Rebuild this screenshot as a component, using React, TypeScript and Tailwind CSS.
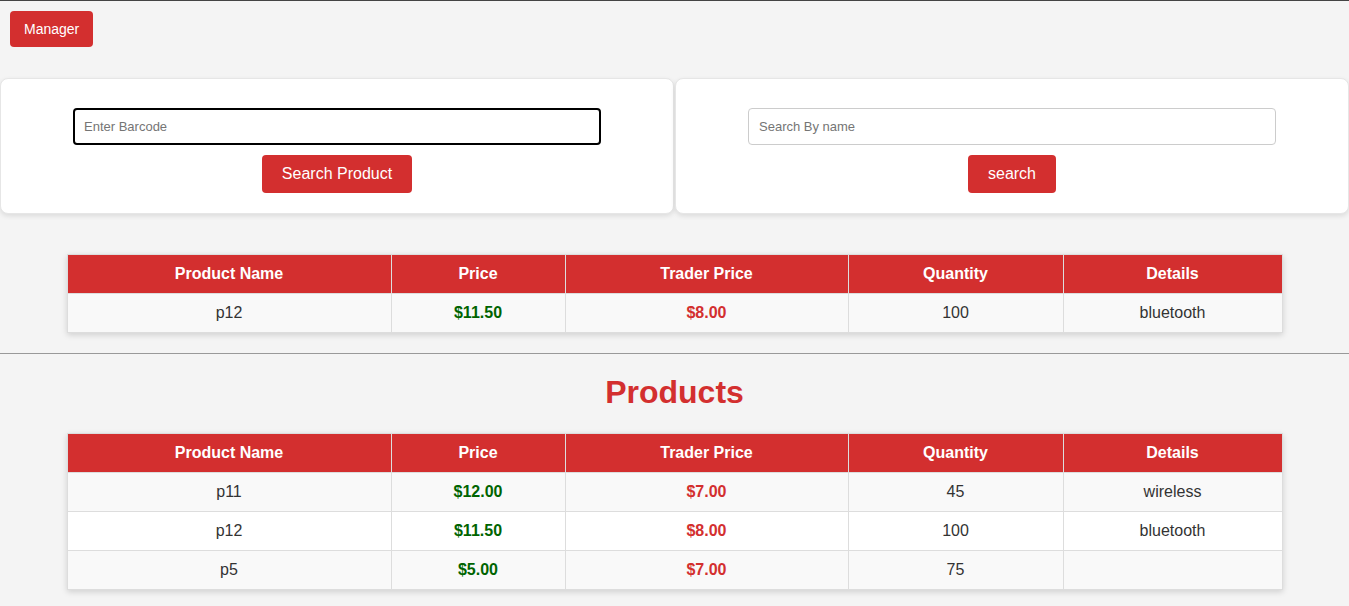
const columns = [
  { label: 'Product Name', w: 'w-[324px]' },
  { label: 'Price', w: 'w-[174px]' },
  { label: 'Trader Price', w: 'w-[283px]' },
  { label: 'Quantity', w: 'w-[215px]' },
  { label: 'Details', w: 'w-[219px]' }
];

type Product = { name: string; price: string; trader: string; qty: string; details: string };

const found: Product[] = [{ name: 'p12', price: '$11.50', trader: '$8.00', qty: '100', details: 'bluetooth' }];

const products: Product[] = [
  { name: 'p11', price: '$12.00', trader: '$7.00', qty: '45', details: 'wireless' },
  { name: 'p12', price: '$11.50', trader: '$8.00', qty: '100', details: 'bluetooth' },
  { name: 'p5', price: '$5.00', trader: '$7.00', qty: '75', details: '' }
];

function ProductTable({ rows }: { rows: Product[] }) {
  return (
    <table className="mx-auto w-[1215px] table-fixed border-collapse bg-white text-[16px] shadow-[0_2px_6px_rgba(0,0,0,0.15)]">
      <thead>
        <tr className="h-[39px] bg-[#d32f2f] text-white">
          {columns.map((c) => (
            <th key={c.label} className={`${c.w} border border-[#ddd] font-bold`}>
              {c.label}
            </th>
          ))}
        </tr>
      </thead>
      <tbody>
        {rows.map((r, i) => (
          <tr key={r.name + i} className={`h-[39px] text-center ${i % 2 === 0 ? 'bg-[#f9f9f9]' : 'bg-white'}`}>
            <td className="border border-[#ddd] text-[#333]">{r.name}</td>
            <td className="border border-[#ddd] font-bold text-[#006400]">{r.price}</td>
            <td className="border border-[#ddd] font-bold text-[#d32f2f]">{r.trader}</td>
            <td className="border border-[#ddd] text-[#333]">{r.qty}</td>
            <td className="border border-[#ddd] text-[#333]">{r.details}</td>
          </tr>
        ))}
      </tbody>
    </table>
  );
}

export default function App() {
  return (
    <div className="min-h-[606px] border-t border-[#444] bg-[#f4f4f4] font-['Liberation_Sans',Arial,sans-serif]">
      <div className="px-[10px] pt-[10px]">
        <button className="h-[36px] rounded-[4px] bg-[#d32f2f] px-[14px] text-[14px] text-white">Manager</button>
      </div>

      <div className="mt-[31px] flex gap-[1px]">
        <div className="flex h-[136px] w-[674px] flex-col items-center rounded-[8px] border border-[#e6e6e6] bg-white pt-[29px] shadow-[0_2px_5px_rgba(0,0,0,0.1)]">
          <input
            autoFocus
            placeholder="Enter Barcode"
            className="h-[37px] w-[528px] rounded-[4px] border-2 border-black px-[9px] text-[13px] text-[#333] outline-none placeholder:text-[#757575]"
          />
          <button className="mt-[10px] h-[38px] rounded-[4px] bg-[#d32f2f] px-5 text-[16px] text-white">Search Product</button>
        </div>
        <div className="flex h-[136px] w-[674px] flex-col items-center rounded-[8px] border border-[#e6e6e6] bg-white pt-[29px] shadow-[0_2px_5px_rgba(0,0,0,0.1)]">
          <input
            placeholder="Search By name"
            className="h-[37px] w-[528px] rounded-[4px] border border-[#ccc] px-[10px] text-[13px] text-[#333] outline-none placeholder:text-[#757575]"
          />
          <button className="mt-[10px] h-[38px] rounded-[4px] bg-[#d32f2f] px-5 text-[16px] text-white">search</button>
        </div>
      </div>

      <div className="mt-[40px]">
        <ProductTable rows={found} />
      </div>

      <hr className="mt-[20px] border-t border-[#999]" />

      <h2 className="mt-[20px] text-center text-[32px] font-bold leading-[37px] text-[#d32f2f]">Products</h2>

      <div className="mt-[22px] pb-4">
        <ProductTable rows={products} />
      </div>
    </div>
  );
}
